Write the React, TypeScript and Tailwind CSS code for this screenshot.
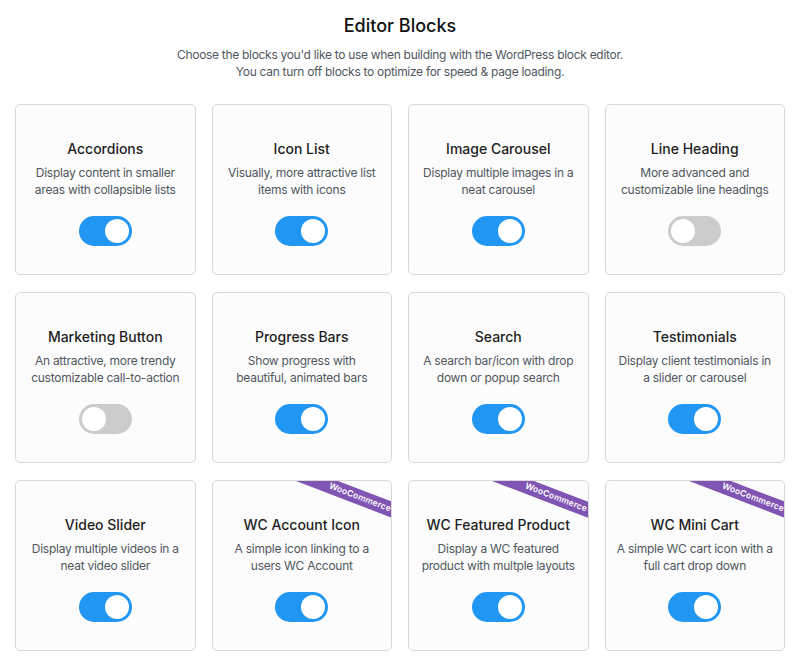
import { useState } from "react"

type Block = {
  title: string
  desc: string[]
  on: boolean
  woo?: boolean
}

const blocks: Block[] = [
  { title: "Accordions", desc: ["Display content in smaller", "areas with collapsible lists"], on: true },
  { title: "Icon List", desc: ["Visually, more attractive list", "items with icons"], on: true },
  { title: "Image Carousel", desc: ["Display multiple images in a", "neat carousel"], on: true },
  { title: "Line Heading", desc: ["More advanced and", "customizable line headings"], on: false },
  { title: "Marketing Button", desc: ["An attractive, more trendy", "customizable call-to-action"], on: false },
  { title: "Progress Bars", desc: ["Show progress with", "beautiful, animated bars"], on: true },
  { title: "Search", desc: ["A search bar/icon with drop", "down or popup search"], on: true },
  { title: "Testimonials", desc: ["Display client testimonials in", "a slider or carousel"], on: true },
  { title: "Video Slider", desc: ["Display multiple videos in a", "neat video slider"], on: true },
  { title: "WC Account Icon", desc: ["A simple icon linking to a", "users WC Account"], on: true, woo: true },
  { title: "WC Featured Product", desc: ["Display a WC featured", "product with multple layouts"], on: true, woo: true },
  { title: "WC Mini Cart", desc: ["A simple WC cart icon with a", "full cart drop down"], on: true, woo: true },
]

const Toggle = ({ on, onClick }: { on: boolean; onClick: () => void }) => {
  return (
    <button
      type="button"
      onClick={onClick}
      className={`flex h-[30px] w-[53px] items-center rounded-full px-[3px] ${on ? "bg-[#2196f3] justify-end" : "bg-[#cccccc] justify-start"}`}
    >
      <span className="block h-[24px] w-[24px] rounded-full bg-white" />
    </button>
  )
}

const BlockCard = ({ block }: { block: Block }) => {
  const [on, setOn] = useState(block.on)

  return (
    <div className="relative flex h-[171px] flex-col items-center overflow-hidden rounded-[5px] border border-[#d8d8d8] bg-[#fcfcfc] pt-[34px]">
      {block.woo && (
        <div className="absolute left-[47px] top-[9px] flex h-[15px] w-[200px] rotate-[21deg] items-center justify-center bg-[#7f54b3]">
          <span className="text-[8.5px] font-semibold leading-none tracking-[0.2px] text-white">WooCommerce</span>
        </div>
      )}
      <h3 className="text-[14px] font-medium leading-[20px] text-[#1e1e1e]">{block.title}</h3>
      <p className="mt-[5px] text-center text-[12px] leading-[17px] tracking-[-0.25px] text-[#50575e]">
        {block.desc[0]}
        <br />
        {block.desc[1]}
      </p>
      <div className="mt-[18px]">
        <Toggle on={on} onClick={() => setOn(!on)} />
      </div>
    </div>
  )
}

export default function App() {
  return (
    <div className="min-h-[665px] w-full bg-white font-['Inter',sans-serif]">
      <div className="pt-[14px] text-center">
        <h1 className="text-[18px] font-medium leading-[24px] text-[#111111]">Editor Blocks</h1>
        <p className="mt-[8px] text-[12px] leading-[17px] tracking-[-0.3px] text-[#50575e]">
          Choose the blocks you'd like to use when building with the WordPress block editor.
          <br />
          You can turn off blocks to optimize for speed &amp; page loading.
        </p>
      </div>

      <div className="mx-auto mt-[24px] grid w-[770px] grid-cols-4 gap-x-[16px] gap-y-[17px]">
        {blocks.map((block) => (
          <BlockCard key={block.title} block={block} />
        ))}
      </div>
    </div>
  )
}
